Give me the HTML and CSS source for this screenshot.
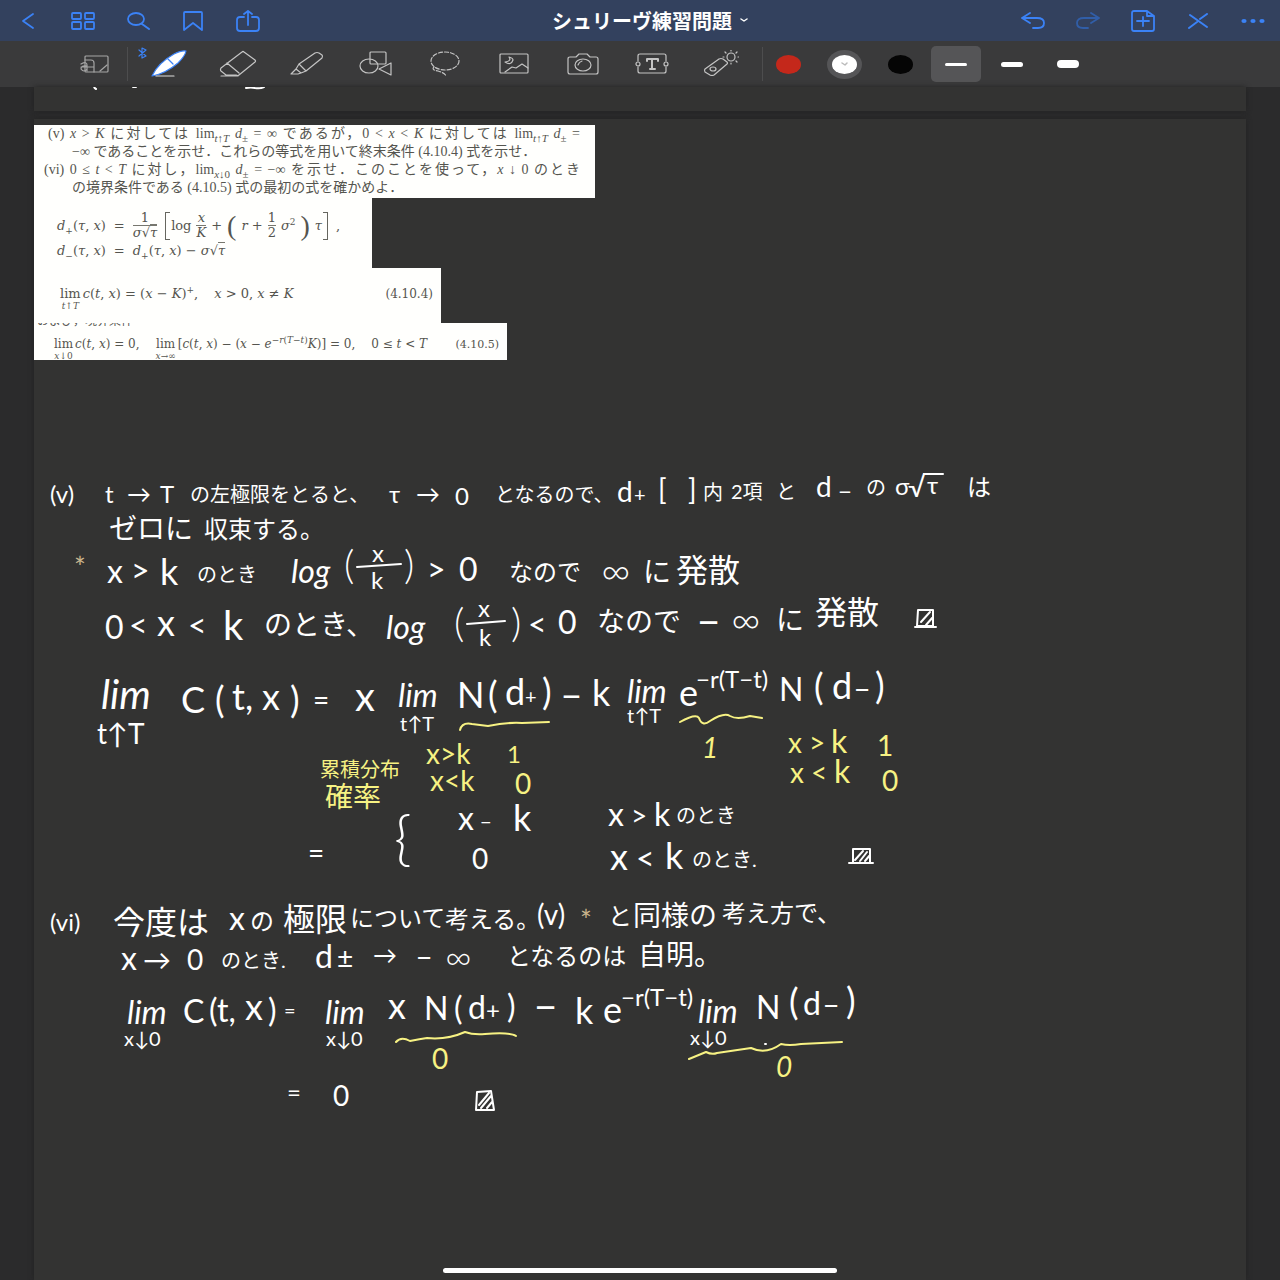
FILE: index.html
```html
<!DOCTYPE html>
<html lang="ja">
<head>
    <meta charset="UTF-8">
    <meta name="viewport" content="width=device-width, initial-scale=1.0">
    <title>シュリーヴ練習問題</title>
    <link rel="stylesheet" href="styles.css">
</head>
<body>

<header class="navbar">
    <div class="nav-group">
        <button aria-label="戻る"><svg width="14" height="18"><path d="M12 2 2 9l10 7"/></svg></button>
        <button aria-label="一覧"><svg width="24" height="18"><rect x="1" y="1" width="9" height="6" rx="1"/><rect x="14" y="1" width="9" height="6" rx="1"/><rect x="1" y="10" width="9" height="7" rx="1"/><rect x="14" y="10" width="9" height="7" rx="1"/></svg></button>
        <button aria-label="検索"><svg width="24" height="18"><ellipse cx="10" cy="7" rx="8" ry="6"/><path d="m16 12 7 5" stroke-width="2"/></svg></button>
        <button aria-label="ブックマーク"><svg width="22" height="20"><path d="M2 2q0-1 1-1h16q1 0 1 1v17l-9-7-9 7z"/></svg></button>
        <button aria-label="共有"><svg width="24" height="22"><path d="M8 7H4Q1 7 1 10v8q0 3 3 3h16q3 0 3-3v-8q0-3-3-3h-4M12 15V1M8 4l4-3 4 3"/></svg></button>
    </div>
    <button class="doc-title">シュリーヴ練習問題 <svg width="8" height="5"><path d="m1 1 3 2 3-2"/></svg></button>
    <div class="nav-group">
        <button aria-label="元に戻す"><svg width="24" height="18"><path d="M9 1 1 6l8 5M1 6h15q7 0 7 5t-6 5h-5"/></svg></button>
        <button class="dim" aria-label="やり直す"><svg width="24" height="18"><path d="m15 1 8 5-8 5M23 6H8q-7 0-7 5t6 5h5"/></svg></button>
        <button aria-label="ページを追加"><svg width="24" height="22"><path d="M3 1h13l7 5v13q0 2-2 2H3q-2 0-2-2V3q0-2 2-2zM16 1v5h7M12 7v9M6 11h12"/></svg></button>
        <button aria-label="編集モード"><svg width="20" height="16"><path d="m2 2 17 12M19 1 12 6M9 9 1 15" stroke-width="2"/></svg></button>
        <button aria-label="その他"><svg class="dots" width="24" height="6"><ellipse cx="3" cy="3" rx="2.6" ry="2"/><ellipse cx="12" cy="3" rx="2.6" ry="2"/><ellipse cx="21" cy="3" rx="2.6" ry="2"/></svg></button>
    </div>
</header>

<div class="toolbar">
    <button class="tool zoom-tool" aria-label="拡大ウィンドウ"><svg width="30" height="20"><rect x="6" y="2" width="23" height="16" rx="1"/><path d="M6 6h6q3 0 3 3v9M2 10q6-3 6 1v6M8 12q-6-1-6 3 3 4 6 0M2 13h13M21 17l7-6"/></svg></button>
    <span class="divider"></span>
    <button class="tool pen-tool" aria-label="ペン">
        <svg class="bluetooth" width="9" height="12"><path d="m1 3 7 6-4 2V1l4 2-7 6"/></svg>
        <svg width="36" height="28"><path class="pen" d="M1 26Q7 13 23 4q8-4 12-3-1 5-8 12Q14 24 1 26z"/><path class="pen-ring" d="m17 9 5 5"/><path class="pen-line" d="M5 26h18"/></svg>
    </button>
    <button class="tool" aria-label="消しゴム"><svg width="38" height="28"><path d="M23 2q1-1 2 0l11 8q1 1 0 2L20 25q-1 1-3 0H7l-5-4q-1-1 0-3zM8 13l12 10M2 26h17"/></svg></button>
    <button class="tool" aria-label="蛍光ペン"><svg width="36" height="26"><path d="m10 13 16-11q2-1 4 0l3 2q1 1 0 3L17 20zM10 13l-3 5 5 4 5-2M7 18l-5 5h7l3-1"/></svg></button>
    <button class="tool" aria-label="図形"><svg width="34" height="26"><rect x="11" y="1" width="16" height="12" rx="1"/><ellipse cx="10" cy="15" rx="9" ry="7"/><path d="m20 18 12-6v12z"/></svg></button>
    <button class="tool" aria-label="なげなわ"><svg width="32" height="28"><ellipse cx="16" cy="11" rx="14" ry="9" stroke-dasharray="4 2"/><path d="M5 17q-3 3 4 4 7 2 8 5" stroke-dasharray="4 2"/></svg></button>
    <button class="tool" aria-label="画像"><svg width="30" height="22"><rect x="1" y="1" width="28" height="19" rx="1"/><path d="m6 19 7-5 4 1 6-4 6 4M10 4q3 4-4 5 6 4 8-2 0-2-4-3z"/></svg></button>
    <button class="tool" aria-label="カメラ"><svg width="32" height="22"><path d="M3 4h6l3-3h8l3 3h6q2 0 2 2v13q0 2-2 2H3q-2 0-2-2V6q0-2 2-2z"/><ellipse cx="16" cy="12" rx="8" ry="6"/><path d="M11 12q1-3 4-4"/></svg></button>
    <button class="tool" aria-label="テキスト"><svg width="34" height="22"><path d="M3 8V3q0-2 2-2h24q2 0 2 2v5M3 14v4q0 2 2 2h24q2 0 2-2v-4"/><circle cx="3" cy="11" r="2"/><circle cx="31" cy="11" r="2"/><path class="bold" d="M12 8V6h11v2M17 6v10M15 16h5"/></svg></button>
    <button class="tool" aria-label="レーザーポインタ"><svg width="36" height="28"><path d="m2 19 14-10q2-1 4 0l4 3q1 1 0 2L11 25q-2 1-4 0l-5-3q-1-2 0-3z"/><ellipse cx="10" cy="19" rx="3" ry="2"/><circle cx="28" cy="7" r="4"/><path d="M28 0v1M28 13v1M20 7h1M35 7h1M22 2l1 1M34 2l-1 1M34 12l-1-1"/></svg></button>
    <span class="divider colors-divider"></span>
    <div class="swatches">
        <button aria-label="赤"><span class="color red"></span></button>
        <button aria-label="白"><span class="color white"><svg width="7" height="4"><path d="m1 1 3 2 2-2"/></svg></span></button>
        <button aria-label="黒"><span class="color black"></span></button>
        <button class="selected" aria-label="細"><span class="line thin"></span></button>
        <button aria-label="中"><span class="line medium"></span></button>
        <button aria-label="太"><span class="line thick"></span></button>
    </div>
</div>

<main class="canvas">
    <section class="page page-previous">
        <svg class="ink" viewBox="34 87 1212 24"><path d="M94 86q0 2 2 3M133 87h3M178 86h2M246 88q5-1 9 0 5 1 9-1"/></svg>
    </section>

    <section class="page">
        <!-- 問題文の切り抜き -->
        <div class="clip clip-problem">
            <p class="full">(v) <i>x</i> &gt; <i>K</i> に対しては lim<sub><i>t</i>↑<i>T</i></sub> <i>d</i><sub>±</sub> = ∞ であるが，0 &lt; <i>x</i> &lt; <i>K</i> に対しては lim<sub><i>t</i>↑<i>T</i></sub> <i>d</i><sub>±</sub> =</p>
            <p class="indent">−∞ であることを示せ．これらの等式を用いて終末条件 (4.10.4) 式を示せ．</p>
            <p class="full outdent">(vi) 0 ≤ <i>t</i> &lt; <i>T</i> に対し，lim<sub><i>x</i>↓0</sub> <i>d</i><sub>±</sub> = −∞ を示せ．このことを使って，<i>x</i> ↓ 0 のとき</p>
            <p class="indent">の境界条件である (4.10.5) 式の最初の式を確かめよ．</p>
        </div>
        <div class="clip clip-d">
            <div class="formula">
                <span><i>d</i><sub>+</sub>(<i>τ</i>, <i>x</i>)</span><span>=</span>
                <span class="frac"><span>1</span><span><i>σ</i>√<span class="root"><i>τ</i></span></span></span>
                <span class="bracket">
                    <span>log</span>
                    <span class="frac"><i>x</i><i>K</i></span>
                    <span>+</span>
                    <span class="paren">(</span><span><i>r</i> +</span><span class="frac"><span>1</span><span>2</span></span><span><i>σ</i><sup>2</sup></span><span class="paren">)</span>
                    <i>τ</i>
                </span>
                <span>,</span>
            </div>
            <div class="formula"><span><i>d</i><sub>−</sub>(<i>τ</i>, <i>x</i>)</span><span>=</span><span><i>d</i><sub>+</sub>(<i>τ</i>, <i>x</i>) − <i>σ</i>√<span class="root"><i>τ</i></span></span></div>
        </div>
        <div class="clip clip-terminal">
            <span class="lim">lim<small><i>t</i>↑<i>T</i></small></span>
            <span><i>c</i>(<i>t</i>, <i>x</i>) = (<i>x</i> − <i>K</i>)<sup>+</sup>,</span>
            <span class="cond"><i>x</i> &gt; 0, <i>x</i> ≠ <i>K</i></span>
            <span class="number">(4.10.4)</span>
        </div>
        <div class="clip clip-boundary">
            <p class="cut">および，境界条件</p>
            <div class="boundary">
                <span class="lim">lim<small><i>x</i>↓0</small></span>
                <span><i>c</i>(<i>t</i>, <i>x</i>) = 0,</span>
                <span class="lim cond">lim<small><i>x</i>→∞</small></span>
                <span>[<i>c</i>(<i>t</i>, <i>x</i>) − (<i>x</i> − <i>e</i><sup>−<i>r</i>(<i>T</i>−<i>t</i>)</sup><i>K</i>)] = 0,</span>
                <span class="cond">0 ≤ <i>t</i> &lt; <i>T</i></span>
                <span class="number">(4.10.5)</span>
            </div>
        </div>

        <!-- 手書きの解答 -->
        <svg class="ink" viewBox="34 360 1212 920">
            <!-- (v) -->
            <g class="s24">
                <text x="50" y="503">(v)</text>
                <text x="105" y="503">t</text>
                <text x="127" y="503">→</text>
                <text x="160" y="503">T</text>
                <text class="s20" x="190" y="502">の左極限をとると、</text>
                <text x="389" y="503">τ</text>
                <text x="416" y="503">→</text>
                <text x="455" y="505">0</text>
                <text class="s20" x="495" y="502">となるので、</text>
                <text class="s28" x="617" y="502">d</text>
                <text class="s20" x="634" y="502">+</text>
                <text class="s28" x="658" y="500">[</text>
                <text class="s28" x="688" y="500">]</text>
                <text class="s20" x="703" y="500">内</text>
                <text class="s20" x="731" y="499">2項</text>
                <text class="s20" x="776" y="499">と</text>
                <text class="s28" x="816" y="497">d</text>
                <text x="838" y="500">−</text>
                <text class="s20" x="866" y="495">の</text>
                <text x="895" y="495">σ</text>
                <text class="s28" x="908" y="497">√</text>
                <path d="M924 474h19"/>
                <text x="927" y="494">τ</text>
                <text x="967" y="496">は</text>
                <text class="s28" x="109" y="539">ゼロに</text>
                <text class="s24" x="204" y="538">収束する。</text>
                <text class="star s28" x="74" y="578">*</text>
            </g>

            <g class="s32">
                <text x="107" y="583">x</text>
                <text x="131" y="582">&gt;</text>
                <text class="s36" x="160" y="585">k</text>
                <text class="s20" x="197" y="582">のとき</text>
                <text class="slant" x="291" y="583">log</text>
                <text class="light s40" x="344" y="579">(</text>
                <text class="light s40" x="404" y="579">)</text>
                <path d="m357 567 44-3"/>
                <text class="s24" x="372" y="562">x</text>
                <text class="s24" x="371" y="589">k</text>
                <text x="427" y="581">&gt;</text>
                <text x="459" y="581">0</text>
                <text class="s24" x="509" y="581">なので</text>
                <text class="light s40" x="601" y="585">∞</text>
                <text class="s28" x="643" y="582">に</text>
                <text x="676" y="582">発散</text>

                <text x="105" y="639">0</text>
                <text x="129" y="637">&lt;</text>
                <text class="s36" x="157" y="636">x</text>
                <text x="188" y="637">&lt;</text>
                <text class="s40" x="223" y="640">k</text>
                <text class="s28" x="264" y="635">のとき、</text>
                <text class="slant" x="386" y="639">log</text>
                <text class="light s40" x="454" y="637">(</text>
                <text class="light s40" x="511" y="637">)</text>
                <path d="m467 624 38-3"/>
                <text class="s24" x="478" y="617">x</text>
                <text class="s24" x="479" y="646">k</text>
                <text x="528" y="636">&lt;</text>
                <text x="558" y="634">0</text>
                <text class="s28" x="597" y="632">なので</text>
                <text class="s40" x="697" y="636">−</text>
                <text class="light s40" x="731" y="634">∞</text>
                <text class="s28" x="776" y="630">に</text>
                <text x="815" y="624">発散</text>
                <path d="M918 610h15v16h-16zM915 627h21M921 622l9-10M926 625l7-8"/>
            </g>

            <g class="s36">
                <text class="slant s40" x="101" y="709">lim</text>
                <text class="s28" x="97" y="744">t↑T</text>
                <text x="181" y="713">C</text>
                <text x="215" y="713">(</text>
                <text x="232" y="710">t,</text>
                <text x="262" y="710">x</text>
                <text x="290" y="713">)</text>
                <text class="s28" x="313" y="710">=</text>
                <text class="s40" x="355" y="711">x</text>
                <text class="slant s32" x="398" y="707">lim</text>
                <text class="s20" x="400" y="731">t↑T</text>
                <text x="457" y="708">N</text>
                <text x="488" y="708">(</text>
                <text x="505" y="705">d</text>
                <text class="s20" x="525" y="704">+</text>
                <text x="542" y="705">)</text>
                <text x="561" y="709">−</text>
                <text x="592" y="706">k</text>
                <text class="slant s32" x="627" y="703">lim</text>
                <text class="s20" x="627" y="723">t↑T</text>
                <text x="679" y="706">e</text>
                <text class="s24" x="696" y="688">−r(T−t)</text>
                <text class="s32" x="779" y="701">N</text>
                <text x="814" y="700">(</text>
                <text x="832" y="699">d</text>
                <text class="s28" x="854" y="700">−</text>
                <text x="875" y="699">)</text>
            </g>

            <g class="yellow s28">
                <path d="M460 730q2-8 12-6l16 2q20-4 34-3l27-1M680 722q16-9 19-4 3 9 11 3 14-9 20-5 7 4 20 0l12 2"/>
                <text class="s20" x="320" y="777">累積分布</text>
                <text x="325" y="807">確率</text>
                <text x="426" y="764">x&gt;k</text>
                <text class="s24" x="507" y="763">1</text>
                <text x="430" y="791">x&lt;k</text>
                <text x="515" y="794">0</text>
                <text class="slant" x="702" y="758">1</text>
                <text x="788" y="753">x</text>
                <text x="809" y="753">&gt;</text>
                <text class="s32" x="831" y="753">k</text>
                <text x="877" y="756">1</text>
                <text x="790" y="783">x</text>
                <text x="811" y="783">&lt;</text>
                <text class="s32" x="834" y="783">k</text>
                <text x="882" y="791">0</text>
            </g>

            <g class="s28">
                <text x="308" y="863">=</text>
                <text class="light s60" x="394" y="859">{</text>
                <text class="s32" x="458" y="830">x</text>
                <text class="s20" x="480" y="829">−</text>
                <text class="s36" x="513" y="831">k</text>
                <text x="472" y="869">0</text>
                <text class="s32" x="608" y="826">x</text>
                <text x="631" y="826">&gt;</text>
                <text class="s32" x="654" y="826">k</text>
                <text class="s20" x="676" y="823">のとき</text>
                <text class="s36" x="610" y="870">x</text>
                <text class="s32" x="636" y="870">&lt;</text>
                <text class="s36" x="665" y="869">k</text>
                <text class="s20" x="692" y="867">のとき.</text>
                <path d="M853 849h17v14h-17zM849 863h24M855 860l8-9M860 861l7-9M865 861l5-6"/>
            </g>

            <!-- (vi) -->
            <g class="s28">
                <text class="s24" x="50" y="931">(vi)</text>
                <text class="s32" x="113" y="934">今度は</text>
                <text class="s32" x="229" y="930">x</text>
                <text class="s24" x="250" y="930">の</text>
                <text class="s32" x="283" y="931">極限</text>
                <text class="s24" x="350" y="927">について</text>
                <text class="s24" x="445" y="928">考える。</text>
                <text x="537" y="925">(v)</text>
                <text class="star" x="580" y="931">*</text>
                <text class="s24" x="608" y="925">と</text>
                <text x="633" y="926">同様の</text>
                <text class="s24" x="722" y="922">考え方で、</text>

                <text class="s32" x="121" y="970">x</text>
                <text x="143" y="970">→</text>
                <text x="187" y="970">0</text>
                <text class="s20" x="221" y="968">のとき.</text>
                <text class="s32" x="315" y="968">d</text>
                <text x="337" y="968">±</text>
                <text class="s24" x="373" y="964">→</text>
                <text x="416" y="968">−</text>
                <text class="light s36" x="445" y="970">∞</text>
                <text class="s24" x="507" y="965">となるのは</text>
                <text x="638" y="965">自明。</text>
            </g>

            <g class="s32">
                <text class="slant" x="127" y="1024">lim</text>
                <text class="s20" x="124" y="1046">x↓0</text>
                <text x="183" y="1023">C</text>
                <text x="209" y="1022">(t,</text>
                <text class="s36" x="245" y="1020">x</text>
                <text x="268" y="1022">)</text>
                <text class="s20" x="284" y="1018">=</text>
                <text class="slant" x="325" y="1024">lim</text>
                <text class="s20" x="326" y="1046">x↓0</text>
                <text class="s36" x="388" y="1019">x</text>
                <text x="424" y="1020">N</text>
                <text x="454" y="1020">(</text>
                <text x="468" y="1019">d</text>
                <text class="s24" x="486" y="1019">+</text>
                <text x="507" y="1018">)</text>
                <text class="s40" x="534" y="1021">−</text>
                <text class="s36" x="575" y="1024">k</text>
                <text class="s36" x="603" y="1023">e</text>
                <text class="s24" x="621" y="1006">−r(T−t)</text>
                <text class="slant" x="698" y="1023">lim</text>
                <text class="s20" x="690" y="1045">x↓0</text>
                <text x="756" y="1019">N</text>
                <text class="s36" x="789" y="1015">(</text>
                <text x="803" y="1015">d</text>
                <text class="s28" x="823" y="1016">−</text>
                <text class="s36" x="846" y="1014">)</text>
                <path d="M765 1044h1"/>
                <text class="s24" x="287" y="1101">=</text>
                <text class="s28" x="333" y="1106">0</text>
                <path d="m477 1092 14-1 3 19h-18zM479 1105l10-12M481 1108l10-12M487 1108l5-6"/>
            </g>
            <g class="yellow s28">
                <path d="M396 1042q5-6 14-1 10-2 17-3 20 2 38-6 8 3 20 2 25-2 31 2M689 1059l17-7q6 3 11 1l34-5q15 7 30-4 8 2 20 0l41-2"/>
                <text x="432" y="1069">0</text>
                <text class="slant" x="776" y="1077">0</text>
            </g>
        </svg>
    </section>
</main>

<div class="home-indicator"></div>

</body>
</html>
```
FILE: styles.css
```css
* {
    box-sizing: border-box;
}

body {
    display: flex;
    flex-direction: column;
    min-height: 100vh;
    margin: 0;
    background-color: #2b2b2c;
    color: #fff;
    font-family: "Noto Sans CJK JP", sans-serif;
}

button {
    display: flex;
    align-items: center;
    justify-content: center;
    padding: 0;
    border: none;
    background: none;
    color: inherit;
    cursor: pointer;
}

svg {
    display: block;
    fill: none;
    stroke: currentColor;
    stroke-width: 1.5;
    stroke-linecap: round;
    stroke-linejoin: round;
}

/* Navigation bar */
.navbar {
    display: flex;
    align-items: center;
    justify-content: space-between;
    height: 41px;
    background-color: #33415e;
}

.nav-group {
    display: flex;
    color: #3b82f6;
}

.nav-group button {
    width: 55px;
    height: 41px;
}

.nav-group svg {
    stroke-width: 1.8;
}

.nav-group .dim {
    color: #315ea8;
}

.nav-group .dots {
    fill: currentColor;
    stroke: none;
}

.doc-title {
    gap: 8px;
    padding-left: 20px;
    font-family: "Noto Sans CJK JP", sans-serif;
    font-size: 20px;
    font-weight: bold;
    line-height: 24px;
}

/* Toolbar */
.toolbar {
    display: flex;
    align-items: center;
    height: 46px;
    padding-left: 61px;
    background-color: #3a3a3b;
}

.tool {
    position: relative;
    flex: none;
    width: 69px;
    height: 46px;
    color: #c4c4c4;
}

.tool svg {
    stroke-width: 1.2;
}

.tool .bold {
    stroke-width: 2;
}

.zoom-tool {
    width: 66px;
}

.zoom-tool svg {
    color: #a5a5a5;
}

.divider {
    width: 1px;
    height: 34px;
    margin-right: 6px;
    background-color: #4d4d4e;
}

.colors-divider {
    margin: 0 0 0 7px;
}

.pen-tool .bluetooth {
    position: absolute;
    top: 6px;
    left: 4px;
    color: #3b82f6;
}

.pen {
    fill: #fff;
    stroke: #3b82f6;
}

.pen-ring {
    stroke: #3b82f6;
}

.pen-line {
    stroke: #ddd;
}

.swatches {
    display: flex;
    gap: 6px;
}

.swatches button {
    width: 50px;
    height: 36px;
    border-radius: 5px;
}

.swatches .selected {
    background-color: #555557;
}

.color {
    display: flex;
    align-items: center;
    justify-content: center;
    width: 25px;
    height: 19px;
    border-radius: 50%;
}

.red {
    background-color: #c4281b;
}

.white {
    background-color: #fff;
    color: #bbb;
    box-shadow: 0 0 0 5px #555557;
}

.black {
    background-color: #050505;
}

.line {
    width: 22px;
    border-radius: 4px;
    background-color: #fff;
}

.thin {
    height: 3px;
}

.medium {
    height: 5px;
}

.thick {
    height: 8px;
}

/* Notebook pages */
.canvas {
    display: flex;
    flex: 1;
    flex-direction: column;
    gap: 8px;
    padding: 0 34px;
}

.page {
    background-color: #333332;
    box-shadow: 0 0 5px #222;
}

.page:last-child {
    flex: 1;
    padding-top: 6px;
}

/* Clippings from the book */
.clip {
    max-width: 100%;
    background-color: #fffffd;
    color: #55554f;
    font-family: "DejaVu Serif", "Noto Sans CJK JP", serif;
    font-size: 13px;
    line-height: 18px;
    white-space: nowrap;
}

.clip p {
    margin: 0;
}

.clip sub,
.clip sup {
    font-size: 9px;
    line-height: 0;
}

.clip-problem {
    width: 561px;
    height: 73px;
    padding: 0 15px 0 14px;
    font-family: "Liberation Serif", "Noto Sans CJK JP", serif;
    font-size: 14px;
}

.clip-problem sub {
    font-size: 11px;
}

.clip-problem .full {
    text-align-last: justify;
}

.clip-problem .outdent {
    margin-left: -4px;
}

.clip-problem .indent {
    padding-left: 24px;
}

.clip-d {
    width: 338px;
    height: 70px;
    padding: 13px 23px 0;
}

.formula {
    display: flex;
    align-items: center;
    gap: 8px;
}

.formula + .formula {
    margin-top: 2px;
}

.frac {
    display: inline-flex;
    flex-direction: column;
    align-items: center;
    line-height: 14px;
}

.frac > :first-child {
    align-self: stretch;
    border-bottom: 1px solid #77776f;
    text-align: center;
}

.root {
    border-top: 1px solid #77776f;
}

.bracket {
    position: relative;
    display: flex;
    align-items: center;
    gap: 5px;
    height: 28px;
    padding: 0 6px;
}

.bracket::before,
.bracket::after {
    content: "";
    position: absolute;
    top: 0;
    bottom: 0;
    width: 4px;
    border: 1px solid #66665f;
}

.bracket::before {
    left: 0;
    border-right: none;
}

.bracket::after {
    right: 0;
    border-left: none;
}

.paren {
    font-family: "Liberation Serif", serif;
    font-size: 28px;
}

.clip-terminal {
    display: flex;
    align-items: baseline;
    gap: 2px;
    width: 407px;
    height: 55px;
    padding: 17px 8px 0 26px;
}

.lim {
    display: inline-flex;
    flex-direction: column;
    align-items: center;
}

.lim small {
    font-size: 9px;
    line-height: 6px;
}

.cond {
    margin-left: 14px;
}

.number {
    margin-left: auto;
    font-size: 12px;
}

.clip-boundary {
    width: 473px;
    height: 37px;
    font-size: 12px;
}

.clip-boundary .number {
    font-size: 11px;
}

/* Only the lower edge of this line is left in the clipping */
.cut {
    display: flex;
    align-items: flex-end;
    height: 5px;
    padding-left: 3px;
    overflow: hidden;
    font-size: 12px;
    line-height: 14px;
}

.boundary {
    display: flex;
    align-items: baseline;
    gap: 2px;
    padding: 7px 8px 0 20px;
}

/* Handwriting */
.ink {
    width: 100%;
    height: auto;
    stroke-width: 2;
    color: #fff;
    font-family: Lato, "Noto Sans CJK JP", sans-serif;
    font-weight: 400;
}

.ink text {
    fill: currentColor;
    stroke: none;
}

.ink .yellow {
    color: #f7f283;
}

.ink .star {
    color: #c9b48c;
}

.slant {
    font-style: italic;
}

.light {
    font-weight: 300;
}

.s20 {
    font-size: 20px;
}

.s24 {
    font-size: 24px;
}

.s28 {
    font-size: 28px;
}

.s32 {
    font-size: 32px;
}

.s36 {
    font-size: 36px;
}

.s40 {
    font-size: 40px;
}

.s60 {
    font-size: 60px;
}

.home-indicator {
    position: fixed;
    bottom: 7px;
    left: 50%;
    width: 394px;
    height: 5px;
    border-radius: 3px;
    background-color: #fff;
    transform: translateX(-50%);
}
```
